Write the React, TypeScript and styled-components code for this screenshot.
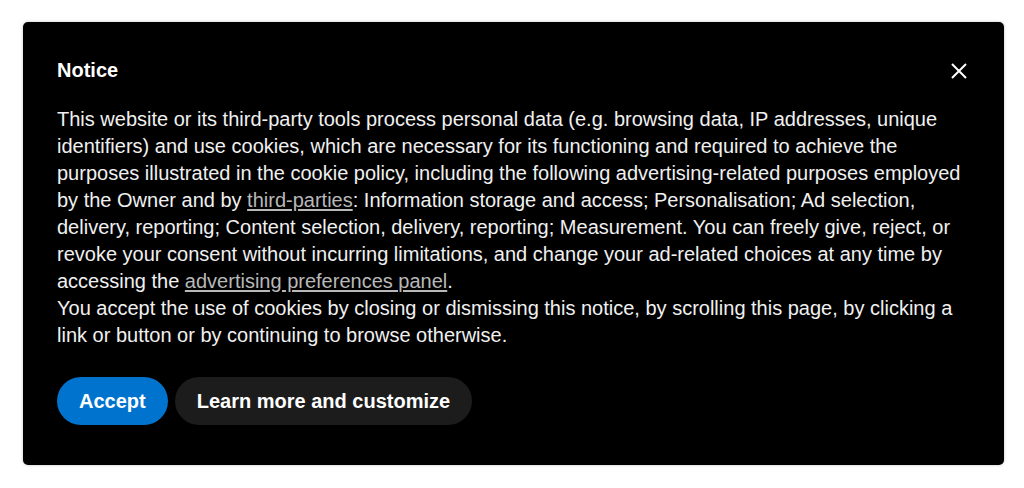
import React from "react";
import styled, { createGlobalStyle } from "styled-components";

const Global = createGlobalStyle`
  html, body { margin: 0; padding: 0; background: #ffffff; }
  body { font-family: "Liberation Sans", Arial, Helvetica, sans-serif; }
`;

const Page = styled.div`
  padding: 22px 20px 23px 23px;
  box-sizing: border-box;
  width: 1024px;
  height: 488px;
`;

const Panel = styled.section`
  background: #000000;
  border-radius: 5px;
  box-shadow: 0 0 3px rgba(0, 0, 0, 0.25);
  padding: 35px 34px 40px 34px;
  box-sizing: border-box;
  height: 443px;
  display: flex;
  flex-direction: column;
  color: #f2f2f2;
`;

const Header = styled.div`
  display: flex;
  justify-content: space-between;
  align-items: center;
`;

const Title = styled.h1`
  margin: 0;
  font-size: 20px;
  line-height: 27px;
  font-weight: 700;
  color: #ffffff;
`;

const Close = styled.button`
  background: none;
  border: none;
  padding: 0;
  width: 22px;
  height: 22px;
  display: flex;
  align-items: center;
  justify-content: center;
  color: #ffffff;
  cursor: pointer;
`;

const Body = styled.div`
  margin-top: 22px;
  font-size: 20px;
  line-height: 27px;
  color: #f0f0f0;
`;

const Para = styled.p`
  margin: 0;
`;

const Link = styled.a`
  color: #b8b8b8;
  text-decoration: underline;
  text-underline-offset: 2px;
`;

const Actions = styled.div`
  margin-top: 28px;
  display: flex;
  gap: 7px;
`;

const Button = styled.button<{ $primary?: boolean }>`
  height: 48px;
  border: none;
  border-radius: 24px;
  padding: 0 22px;
  font-family: "Liberation Sans", Arial, sans-serif;
  font-size: 20px;
  font-weight: 700;
  color: #ffffff;
  background: ${(p) => (p.$primary ? "#0073ce" : "#1c1c1c")};
  cursor: pointer;
`;

export default function App() {
  return (
    <>
      <Global />
      <Page>
        <Panel>
          <Header>
            <Title>Notice</Title>
            <Close aria-label="Close">
              <svg width="16" height="16" viewBox="0 0 16 16">
                <path d="M1 1 L15 15 M15 1 L1 15" stroke="#fff" strokeWidth="2" strokeLinecap="butt" />
              </svg>
            </Close>
          </Header>
          <Body>
            <Para>
              This website or its third-party tools process personal data (e.g. browsing data, IP addresses, unique
              identifiers) and use cookies, which are necessary for its functioning and required to achieve the
              purposes illustrated in the cookie policy, including the following advertising-related purposes employed
              by the Owner and by <Link href="#">third-parties</Link>: Information storage and access; Personalisation; Ad selection,
              delivery, reporting; Content selection, delivery, reporting; Measurement. You can freely give, reject, or
              revoke your consent without incurring limitations, and change your ad-related choices at any time by
              accessing the <Link href="#">advertising preferences panel</Link>.
            </Para>
            <Para>
              You accept the use of cookies by closing or dismissing this notice, by scrolling this page, by clicking a
              link or button or by continuing to browse otherwise.
            </Para>
          </Body>
          <Actions>
            <Button $primary>Accept</Button>
            <Button>Learn more and customize</Button>
          </Actions>
        </Panel>
      </Page>
    </>
  );
}
